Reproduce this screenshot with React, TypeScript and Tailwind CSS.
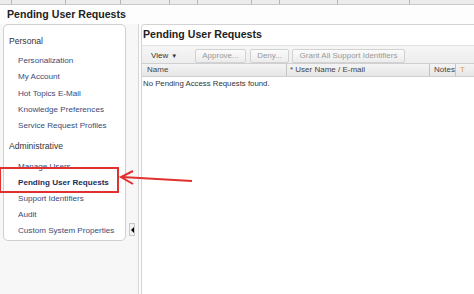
import React from "react";

const tabs = [12, 54, 55, 49, 28, 54, 28, 58, 72];

const personal = [
  "Personalization",
  "My Account",
  "Hot Topics E-Mail",
  "Knowledge Preferences",
  "Service Request Profiles",
];

const admin = [
  "Manage Users",
  "Pending User Requests",
  "Support Identifiers",
  "Audit",
  "Custom System Properties",
];

function NavLink({ label, tall }: { label: string; tall?: boolean }) {
  const active = label === "Pending User Requests";
  return (
    <div
      className={
        (tall ? "h-[16.25px]" : "h-[16px]") +
        " pl-[14px] flex items-center text-[8.1px] leading-none " +
        (active ? "font-bold text-[#1d2d5c]" : "text-[#3a4a78]")
      }
    >
      {label}
    </div>
  );
}

function ToolButton({ label, width }: { label: string; width: string }) {
  return (
    <div
      className={
        "h-[14px] flex items-center justify-center border border-[#d2d2d2] rounded-[2px] bg-gradient-to-b from-[#fbfbfb] to-[#ececec] text-[#9a9a9a] text-[8px] " +
        width
      }
    >
      {label}
    </div>
  );
}

export default function App() {
  return (
    <div className="relative w-[474px] h-[294px] overflow-hidden bg-[#fdfdfd] font-['Liberation_Sans',Arial,sans-serif] text-[#333]">
      {/* tab strip remnant */}
      <div className="h-[5px] flex bg-[#ececec] border-b border-[#c9c9c9]">
        {tabs.map((w, i) => (
          <div key={i} className="h-full border-r border-[#b5b5b5]" style={{ width: w }} />
        ))}
      </div>

      {/* page title */}
      <div className="h-[19px] pl-[7px] flex items-center text-[10.6px] font-bold text-[#222]">
        Pending User Requests
      </div>

      <div className="flex h-[270px]">
        {/* sidebar */}
        <div className="relative w-[139px] shrink-0 bg-[#f7f7f7] border-r border-[#d6d6d6] pl-[3px]">
          <div className="w-[123px] bg-white border border-[#cfcfcf] rounded-[5px] pt-[8px] pb-[1px]">
            <div className="h-[16px] pl-[5px] flex items-center text-[8.6px] text-[#333]">Personal</div>
            <div className="mt-[4px]">
              {personal.map((p) => (
                <NavLink key={p} label={p} tall />
              ))}
            </div>
            <div className="mt-[4px] h-[16px] pl-[5px] flex items-center text-[8.6px] text-[#333]">
              Administrative
            </div>
            <div className="mt-[5px]">
              {admin.map((p) => (
                <NavLink key={p} label={p} />
              ))}
            </div>
          </div>
          {/* collapse handle */}
          <div className="absolute left-[129px] top-[199px] w-[6px] h-[13px] bg-[#f2f2f2] border border-[#c8c8c8] flex items-center justify-center">
            <div className="w-0 h-0 border-y-[3px] border-y-transparent border-r-[3px] border-r-black" />
          </div>
        </div>

        {/* main panel */}
        <div className="flex-1 ml-[2px] border-l border-t border-[#d3d3d3] rounded-tl-[4px] bg-white">
          <div className="h-[20px] pl-[1px] flex items-center text-[10.6px] font-bold text-[#222]">
            Pending User Requests
          </div>
          <div className="h-[18px] flex items-end gap-[4px] bg-gradient-to-b from-[#f6f6f6] to-[#ededed] border-t border-[#e2e2e2] pl-[9px]">
            <div className="h-[14px] w-[40px] flex items-center text-[8px] text-[#333]">
              View <span className="ml-[3px] text-[6px]">▼</span>
            </div>
            <ToolButton label="Approve..." width="w-[51px]" />
            <ToolButton label="Deny..." width="w-[39px]" />
            <div className="-ml-[1px]">
              <ToolButton label="Grant All Support Identifiers" width="w-[113px]" />
            </div>
          </div>
          <div className="h-[14px] flex bg-gradient-to-b from-[#f4f4f4] to-[#e6e6e6] border-y border-[#cfcfcf] text-[8px] text-[#444]">
            <div className="w-[145px] pl-[5px] flex items-center border-r border-[#c4c4c4]">Name</div>
            <div className="w-[143px] pl-[3px] flex items-center border-r border-[#c4c4c4]">* User Name / E-mail</div>
            <div className="w-[26px] pl-[4px] flex items-center border-r border-[#c4c4c4]">Notes</div>
            <div className="pl-[4px] flex items-center text-[#d8a640]">T</div>
          </div>
          <div className="h-[13px] pl-[1px] flex items-center text-[7.8px] text-[#333]">
            No Pending Access Requests found.
          </div>
        </div>
      </div>

      {/* annotation: red box + arrow */}
      <div className="absolute left-[-1px] top-[167px] w-[120px] h-[26px] border-2 border-[#e0302f]" />
      <svg className="absolute left-0 top-0" width="474" height="294">
        <line x1="192" y1="181" x2="122" y2="177" stroke="#e0302f" strokeWidth="2" />
        <polyline points="133,171 121,177 133,184" fill="none" stroke="#e0302f" strokeWidth="2" />
      </svg>
    </div>
  );
}
